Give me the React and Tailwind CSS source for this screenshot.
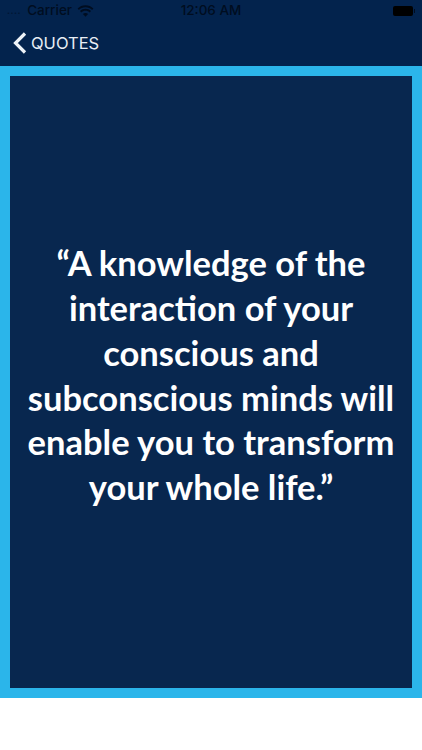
const QUOTE_LINES = [
  "“A knowledge of the",
  "interaction of your",
  "conscious and",
  "subconscious minds will",
  "enable you to transform",
  "your whole life.”",
];

function StatusBar() {
  return (
    <div className="flex h-[20px] items-center justify-between pl-[7px] pr-[7px] pt-[1px] text-[13.500px] font-medium text-[#000d20] font-['Inter',sans-serif]">
      <div className="flex w-[140px] items-center">
        <span className="mr-[6px] text-[10px] tracking-[0.5px] opacity-60">....</span>
        <span>Carrier</span>
        {/* Wifi */}
        <svg className="ml-[5px]" width="17" height="12" viewBox="0 0 17 12" fill="#000d20">
          <path d="M8.500 2.200c2.600 0 4.900 1 6.600 2.700l1.300-1.400C14.400 1.400 11.600.2 8.500.2S2.600 1.400.6 3.500l1.300 1.400C3.600 3.200 5.900 2.200 8.500 2.200z" />
          <path d="M8.500 5.700c1.600 0 3.100.6 4.200 1.700l1.300-1.400c-1.500-1.400-3.400-2.300-5.500-2.300S4.500 4.600 3 6l1.300 1.400c1.100-1.100 2.600-1.700 4.200-1.700z" />
          <path d="M8.500 8c-1 0-1.900.4-2.600 1.100l2.600 2.700 2.600-2.700C10.400 8.400 9.500 8 8.500 8z" />
        </svg>
      </div>
      <span>12:06 AM</span>
      <div className="flex w-[140px] justify-end">
        {/* Battery */}
        <div className="flex items-center">
          <div className="h-[10px] w-[20px] rounded-[2px] bg-black" />
          <div className="ml-[1px] h-[4px] w-[1px] bg-[#000d20]" />
        </div>
      </div>
    </div>
  );
}

function NavBar() {
  return (
    <div className="flex h-[46px] items-center pl-[13px] text-white">
      <svg width="14" height="24" viewBox="0 0 14 24" fill="none" stroke="#eef3f8" strokeWidth="3.2">
        <path d="M12 2.500 2.500 12l9.500 9.500" />
      </svg>
      <span className="ml-[4px] text-[16.500px] font-['Inter',sans-serif] text-[#e8eef5]">QUOTES</span>
    </div>
  );
}

export default function App() {
  return (
    <div className="flex h-[750px] w-[422px] flex-col overflow-hidden bg-white">
      <div className="bg-[#03234d]">
        <StatusBar />
        <NavBar />
      </div>
      <div className="flex h-[632px] border-[10px] border-[#2bb5ea] bg-[#08274f]">
        <div className="flex flex-1 flex-col items-center justify-center pb-[13px] font-['Lato',sans-serif] text-[34.500px] font-bold leading-[44.700px] text-white">
          {QUOTE_LINES.map((line) => (
            <div key={line} className="whitespace-nowrap">{line}</div>
          ))}
        </div>
      </div>
    </div>
  );
}
